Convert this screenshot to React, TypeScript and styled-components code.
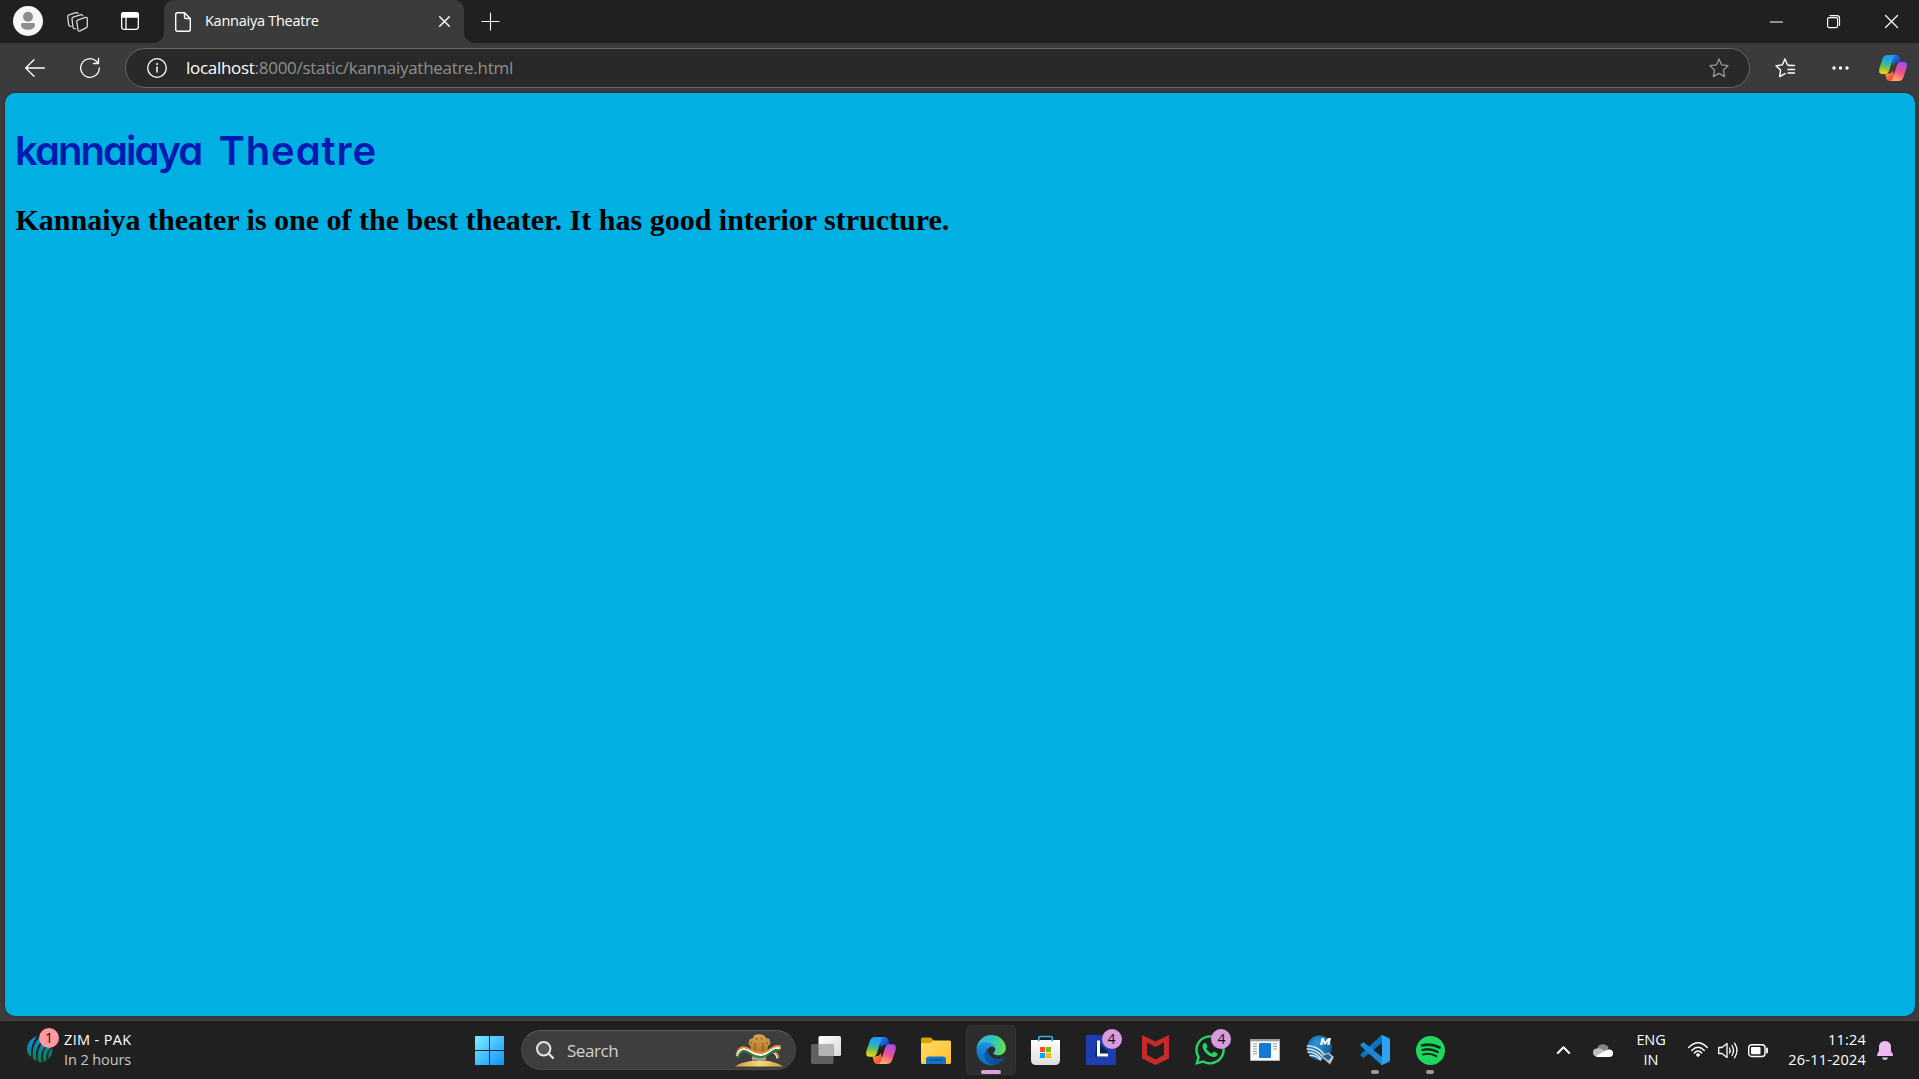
import React from "react";
import styled, { createGlobalStyle, css } from "styled-components";
import { FaWhatsapp } from "react-icons/fa";

const UI = `"Open Sans", "Noto Sans", sans-serif`;

const GlobalStyle = createGlobalStyle`
  * { box-sizing: border-box; }
  html, body { margin: 0; padding: 0; overflow: hidden; }
  svg { display: block; flex: none; overflow: visible; }
`;

const Desktop = styled.div`
  display: flex;
  flex-direction: column;
  width: 1919px;
  height: 1079px;
  background: #3b3b3b;
  font-family: ${UI};
  color: #fff;
`;

const TabStrip = styled.div`
  display: flex;
  height: 43px;
  background: #202020;
`;

const Slot = styled.div<{ $w: number; $dx?: number; $up?: number }>`
  display: flex;
  flex: none;
  align-items: center;
  justify-content: center;
  width: ${(p) => p.$w}px;
  padding-left: ${(p) => p.$dx ?? 0}px;
  padding-bottom: ${(p) => p.$up ?? 0}px;
`;

const Spacer = styled.div`
  flex: 1;
`;

const Tab = styled.div`
  position: relative;
  display: flex;
  align-items: center;
  width: 300px;
  margin-left: 2px;
  padding: 0 14px 0 11px;
  background: #3b3b3b;
  border-radius: 10px 10px 0 0;

  &::before,
  &::after {
    content: "";
    position: absolute;
    bottom: 0;
    width: 10px;
    height: 10px;
  }
  &::before {
    left: -10px;
    background: radial-gradient(circle at 0 0, transparent 9.5px, #3b3b3b 10px);
  }
  &::after {
    right: -10px;
    background: radial-gradient(circle at 100% 0, transparent 9.5px, #3b3b3b 10px);
  }
`;

const TabTitle = styled.span`
  flex: 1;
  margin-left: 14px;
  margin-top: -2px;
  font-size: 14.5px;
  letter-spacing: -0.26px;
  white-space: nowrap;
`;

const Toolbar = styled.div`
  display: flex;
  height: 50px;
  padding: 5px 0 5px 12px;
`;

const AddressBar = styled.div`
  display: flex;
  flex: none;
  align-items: center;
  width: 1625px;
  height: 40px;
  margin-left: 12px;
  border: 1px solid #666;
  border-radius: 20px;
  background: #292929;
  padding: 0 20px 0 21px;
`;

const Url = styled.span`
  flex: 1;
  margin-left: 19px;
  margin-top: -2px;
  font-size: 17px;
  letter-spacing: -0.29px;
  color: #8f8f8f;
  white-space: nowrap;
`;

const Host = styled.span`
  color: #fff;
`;

const Page = styled.main`
  flex: none;
  width: 1910px;
  height: 923px;
  margin: 0 0 0 5px;
  padding: 30px 10px;
  border-radius: 10px;
  background: #00b0e3;
  box-shadow: 0 0 2px rgba(0, 0, 0, 0.5);
`;

const Heading = styled.h1`
  display: flex;
  gap: 17px;
  margin: 0;
  font-family: "Comic Sans MS", Inter, sans-serif;
  font-feature-settings: "cv11";
  font-size: 40px;
  font-weight: 600;
  line-height: 56px;
  color: #001ab0;
`;

const Word = styled.span<{ $spacing: number }>`
  letter-spacing: ${(p) => p.$spacing}px;
`;

const Description = styled.h2`
  margin: 23px 0 0;
  padding-left: 0.5px;
  font-family: "Times New Roman", "Liberation Serif", serif;
  font-size: 30px;
  line-height: 36px;
  font-weight: 700;
  color: #000;
`;

const Taskbar = styled.footer`
  display: flex;
  align-items: stretch;
  height: 59px;
  margin-top: 4px;
  padding-top: 4px;
  border-top: 1px solid #424242;
  background: #202020;
`;

const Widget = styled.div`
  position: relative;
  width: 464px;
  padding-left: 27px;
  display: flex;
  align-items: flex-start;
`;

const WidgetText = styled.div`
  margin-left: 11px;
  font-size: 14.5px;
  line-height: 20px;
  padding-top: 5px;
  letter-spacing: 0.35px;
`;

const Muted = styled.div`
  color: #c8c8c8;
  letter-spacing: -0.1px;
`;

const BallIcon = styled.div`
  padding-top: 10px;
  width: 26px;
`;

const Badge = styled.span<{ $color: string; $left: number; $top: number }>`
  position: absolute;
  left: ${(p) => p.$left}px;
  top: ${(p) => p.$top}px;
  width: 20px;
  height: 20px;
  border-radius: 50%;
  background: ${(p) => p.$color};
  color: #111;
  font-size: 14px;
  line-height: 20px;
  text-align: center;
`;

const Apps = styled.div`
  display: flex;
  gap: 4.95px;
  height: 50px;
`;

const App_ = styled.div<{ $active?: boolean; $running?: boolean }>`
  position: relative;
  display: flex;
  align-items: center;
  justify-content: center;
  width: 50px;
  height: 50px;
  border-radius: 5px;
  ${(p) =>
    p.$active &&
    css`
      background: #2d2d2d;
      box-shadow: inset 0 0 0 1px #333;
    `}
  ${(p) =>
    (p.$active || p.$running) &&
    css`
      &::after {
        content: "";
        position: absolute;
        bottom: 1px;
        left: ${p.$active ? 15 : 21}px;
        width: ${p.$active ? 20 : 8}px;
        height: 4px;
        border-radius: 2px;
        background: ${p.$active ? "#dc9fe0" : "#9a9a9a"};
      }
    `}
`;

const SearchBox = styled.div`
  display: flex;
  align-items: center;
  width: 275px;
  height: 40px;
  margin-top: 5px;
  margin-left: 2px;
  padding: 0 12px 0 14px;
  border-radius: 20px;
  border: 1px solid #494949;
  border-top-color: #606060;
  background: #3e3e3e;
`;

const SearchLabel = styled.span`
  flex: 1;
  margin-left: 13px;
  font-size: 17px;
  letter-spacing: -0.4px;
  color: #d2d2d2;
`;

const Tray = styled.div`
  display: flex;
  height: 50px;
  margin-left: auto;
  padding-right: 16px;
`;

const TrayText = styled.div<{ $w: number; $align: string; $spacing: number }>`
  width: ${(p) => p.$w}px;
  padding-top: 5px;
  text-align: ${(p) => p.$align};
  font-size: 14.5px;
  line-height: 20px;
  letter-spacing: ${(p) => p.$spacing}px;
  white-space: nowrap;
`;

const line = { fill: "none", stroke: "#fff", strokeLinecap: "round" as const, strokeLinejoin: "round" as const };

const CopilotLogo = ({ id, w = 28, h = 26 }: { id: string; w?: number; h?: number }) => (
  <svg width={w} height={h} viewBox="0 0 28 26" preserveAspectRatio="none">
    <defs>
      <linearGradient id={id + "a"} x1=".5" y1="0" x2=".35" y2="1">
        <stop offset="0" stopColor="#1c9cf0" />
        <stop offset=".35" stopColor="#22aed0" />
        <stop offset=".65" stopColor="#6cc05a" />
        <stop offset="1" stopColor="#ffd200" />
      </linearGradient>
      <linearGradient id={id + "b"} x1=".7" y1="0" x2=".3" y2="1">
        <stop offset="0" stopColor="#a04df2" />
        <stop offset=".5" stopColor="#f0508c" />
        <stop offset="1" stopColor="#ffb464" />
      </linearGradient>
      <linearGradient id={id + "c"} x1="0" y1="0" x2="1" y2="1">
        <stop offset="0" stopColor="#2a7cf0" />
        <stop offset="1" stopColor="#0c38b8" />
      </linearGradient>
      <linearGradient id={id + "d"} x1="0" y1="0" x2="1" y2="1">
        <stop offset="0" stopColor="#ffa04a" />
        <stop offset="1" stopColor="#e83c32" />
      </linearGradient>
    </defs>
    <path d="M13 0H17.2C19.2 0 20.2 1 20.8 3L22 7.5H18.5C16 7.5 15 8.5 14.3 10.5L13 6Z" fill={`url(#${id}c)`} />
    <path d="M15 26H10.8C8.8 26 7.8 25 7.2 23L6 18.5H9.5C12 18.5 13 17.5 13.7 15.5L15 20Z" fill={`url(#${id}d)`} />
    <path d="M8.5 0H17.2C15.2 0 14.5 1.5 13.9 3.5L10.2 15.5C9.4 18 8.2 19 6 19H3C0 19-.3 16 .5 13L3.5 4C4.5 1 6 0 8.5 0Z" fill={`url(#${id}a)`} />
    <path d="M19.5 26H10.8C12.8 26 13.5 24.5 14.1 22.5L17.8 10.5C18.6 8 19.8 7 22 7H25C28 7 28.3 10 27.5 13L24.5 22C23.5 25 22 26 19.5 26Z" fill={`url(#${id}b)`} />
  </svg>
);

const EdgeLogo = () => (
  <svg width="30" height="30" viewBox="2 4 252 254">
    <defs>
      <linearGradient id="e1" x1="0" y1=".5" x2="1" y2=".5">
        <stop offset="0" stopColor="#0c59a4" />
        <stop offset="1" stopColor="#114a8b" />
      </linearGradient>
      <linearGradient id="e2" x1=".6" y1="0" x2=".2" y2="1">
        <stop offset="0" stopColor="#1b9de2" />
        <stop offset=".5" stopColor="#1680d0" />
        <stop offset="1" stopColor="#0669bc" />
      </linearGradient>
      <linearGradient id="e3" x1="0" y1=".4" x2="1" y2=".5">
        <stop offset="0" stopColor="#32b5e8" />
        <stop offset=".5" stopColor="#2fc2c0" />
        <stop offset="1" stopColor="#62e050" />
      </linearGradient>
    </defs>
    <path fill="url(#e1)" d="M235.68 195.46a93.73 93.73 0 0 1-10.54 4.71 101.87 101.87 0 0 1-35.9 6.46c-47.32 0-88.54-32.55-88.54-74.32A31.48 31.48 0 0 1 117.13 105c-42.8 1.8-53.8 46.4-53.8 72.53 0 73.88 68.09 81.37 82.76 81.37 7.91 0 19.84-2.3 27-4.56l1.31-.44a128.34 128.34 0 0 0 66.6-52.8 4 4 0 0 0-5.32-5.64Z" />
    <path fill="url(#e2)" d="M110.34 246.34A79.2 79.2 0 0 1 87.6 225a80.72 80.72 0 0 1 29.53-120c3.12-1.47 8.45-4.13 15.54-4a32.35 32.35 0 0 1 25.69 13 31.88 31.88 0 0 1 6.36 18.66c0-.21 24.46-79.6-80-79.6-43.9 0-80 41.66-80 78.21a130.15 130.15 0 0 0 12.11 56 128 128 0 0 0 156.38 67.11 75.55 75.55 0 0 1-62.78-8Z" />
    <path fill="url(#e3)" d="M149.94 153.78c-.81 1.05-3.3 2.5-3.3 5.66 0 2.61 1.7 5.12 4.72 7.23 14.38 10 41.49 8.68 41.56 8.68a59.56 59.56 0 0 0 30.27-8.35 61.38 61.38 0 0 0 30.43-52.88c.26-22.41-8-37.31-11.34-43.91C221.08 28.77 178.37 4.6 130.67 4.6a126 126 0 0 0-126 126.2C5.16 94.3 41.4 65.23 84.87 65.23c3.68 0 24.69.36 44.2 10.6 17.2 9 26.21 19.94 32.47 30.75 4 9 4.67 25.4 -3.33 39.05Z" />
  </svg>
);

const starPath = "M10 1 12.7 6.9 19 7.7 14.4 12.1 15.6 18.6 10 15.4 4.4 18.6 5.6 12.1 1 7.7 7.3 6.9Z";

const Emblem = () => (
  <svg width="48" height="33" viewBox="0 0 48 33">
    <defs>
      <linearGradient id="gold" x1="0" y1="0" x2="0" y2="1">
        <stop offset="0" stopColor="#d9a648" />
        <stop offset="1" stopColor="#a86f20" />
      </linearGradient>
      <linearGradient id="mound" x1="0" y1="0" x2="1" y2="0">
        <stop offset="0" stopColor="#c99b3c" />
        <stop offset=".5" stopColor="#f6d980" />
        <stop offset="1" stopColor="#d0a040" />
      </linearGradient>
    </defs>
    <path d="M0 32.500Q2 30.500 7 29Q24 23.500 41 29Q46 30.500 48 32.500Z" fill="url(#mound)" />
    <path d="M17 26.500V23H31V26.500Q24 25.500 17 26.500Z" fill="#9c9ca4" />
    <path d="M19 1.500Q24-1 29 1.500L31 4 34.500 5 35.500 10 33 12 31.500 23H17L15.500 12 13.500 10 14.500 5.500 18 4Z" fill="url(#gold)" />
    <path d="M21.500 3.500V6M26.500 3.500V6M20 9V20M28 9V20M17 8 15.500 10M31.500 8 33 10" stroke="#80561c" strokeWidth="1" fill="none" />
    <g fill="none">
      <path d="M1.500 20.500C4 12 9 11.500 15 15.500S27 21 34 16 42 11.800 46 12.300" stroke="#f08a35" strokeWidth="1.900" />
      <path d="M2 22.300C4.500 14 9 13.500 15 17.500S27 23 34 18 42 13.800 45.500 14.200" stroke="#fff" strokeWidth="1.900" />
      <path d="M2.500 24.300C5 16 9 15.500 15 19.500S27 25 34 20 41 15.800 45 16.200" stroke="#25853a" strokeWidth="1.900" />
      <path d="M40 18.500Q43.500 19.500 43.500 24" stroke="#f08a35" strokeWidth="1.500" />
      <path d="M38.500 19Q42 20.500 42 24.500" stroke="#fff" strokeWidth="1.300" />
    </g>
  </svg>
);

const App = () => (
  <>
    <GlobalStyle />
    <Desktop>
      <TabStrip>
        <Slot $w={56} $up={1}>
          <svg width="30" height="30" viewBox="0 0 30 30">
            <circle cx="15" cy="15" r="15" fill="#f7f7f7" />
            <circle cx="15" cy="10.700" r="5" fill="#8e8e8e" />
            <path d="M9.500 17H20.500Q22 17 22 18.500C22 22 19 23.800 15 23.800S8 22 8 18.500Q8 17 9.500 17Z" fill="#8e8e8e" />
          </svg>
        </Slot>
        <Slot $w={42}>
          <svg width="21" height="20" viewBox="0 0 21 20" {...line} stroke="#d8d8d8" strokeWidth="1.300">
            <path d="M9.700 9.700Q9.700 8.300 11 7.800L18.500 5.400Q20.300 5 20.300 6.700V14Q20.300 15.300 19 15.900L13 18.900Q11.300 19.600 11 18Z" />
            <path d="M8.500 16.600 7.500 16.700Q6.300 16.600 6 15.300L5 7Q4.900 5.700 6.200 5.100L14 2.700Q15.300 2.400 15.700 3.700" />
            <path d="M4.200 14.300 3 14.200Q1.900 14 1.700 12.800L.7 4.800Q.6 3.500 1.900 2.900L9 .6Q10.300.300 10.900 1.400" />
          </svg>
        </Slot>
        <Slot $w={64} $up={1}>
          <svg width="18" height="18" viewBox="0 0 18 18" {...line} strokeWidth="1.300">
            <rect x=".65" y=".65" width="16.700" height="16.700" rx="2.500" />
            <path d="M.6 5V3Q.6.6 3 .6H15Q17.400.6 17.400 3V5Z" fill="#fff" />
            <path d="M5 5V17.300" />
          </svg>
        </Slot>
        <Tab>
          <svg width="16" height="20" viewBox="0 0 16 20" {...line} strokeWidth="1.400">
            <path d="M2.500.7H9.500L15.300 6.500V17.500Q15.300 19.300 13.500 19.300H2.500Q.7 19.300.7 17.500V2.500Q.7.7 2.500.7ZM9.500 1V5Q9.500 6.500 11 6.500H15" />
          </svg>
          <TabTitle>Kannaiya Theatre</TabTitle>
          <svg width="11" height="11" viewBox="0 0 11 11" {...line} strokeWidth="1.400">
            <path d="M.7.7 10.300 10.300M10.300.7.7 10.300" />
          </svg>
        </Tab>
        <Slot $w={53} $up={1}>
          <svg width="17" height="17" viewBox="0 0 17 17" {...line} strokeWidth="1.100">
            <path d="M8.500 0V17M0 8.500H17" />
          </svg>
        </Slot>
        <Spacer />
        <Slot $w={54}>
          <svg width="13" height="2" viewBox="0 0 13 2"><path d="M0 .5H13V1.500H0Z" fill="#fff" /></svg>
        </Slot>
        <Slot $w={61}>
          <svg width="13" height="13" viewBox="0 0 13 13" {...line} strokeWidth="1.200">
            <rect x=".6" y="2.600" width="10" height="10" rx="1.500" />
            <path d="M3 .6H10Q12.500.6 12.500 3V10.300" />
          </svg>
        </Slot>
        <Slot $w={55}>
          <svg width="13" height="13" viewBox="0 0 13 13" {...line} strokeWidth="1.200">
            <path d="M.5.5 12.500 12.500M12.500.5.500 12.500" />
          </svg>
        </Slot>
      </TabStrip>

      <Toolbar>
        <Slot $w={46} $up={1}>
          <svg width="20" height="18" viewBox="0 0 20 18" {...line} strokeWidth="1.300">
            <path d="M19.300 9H1M9 .7.700 9 9 17.300" />
          </svg>
        </Slot>
        <Slot $w={55} $dx={9} $up={1}>
          <svg width="20" height="20" viewBox="0 0 20 20" {...line} strokeWidth="1.300">
            <path d="M19.300 10A9.300 9.300 0 1 1 16.200 3.100L18.500 5.300M18.500.5V5.500H13.500" />
          </svg>
        </Slot>
        <AddressBar>
          <svg width="20" height="20" viewBox="0 0 20 20" {...line} strokeWidth="1.300">
            <circle cx="10" cy="10" r="9.300" />
            <path d="M10 9V14" strokeWidth="1.500" />
            <circle cx="10" cy="6" r=".5" fill="#fff" strokeWidth="1" />
          </svg>
          <Url><Host>localhost</Host>:8000/static/kannaiyatheatre.html</Url>
          <svg width="20" height="20" viewBox="0 0 20 20" {...line} stroke="#989898" strokeWidth="1.300">
            <path d={starPath} />
          </svg>
        </AddressBar>
        <Slot $w={70}>
          <svg width="20" height="20" viewBox="0 0 20 20" {...line} strokeWidth="1.400">
            <path d="M17 7.400 12.500 6.900 10 1 7.300 6.900 1 7.700 5.600 12.100 4.700 18.600 10 15.600M13.500 7.500H19.500M13 11.500H19.500M13 15H19.500" />
          </svg>
        </Slot>
        <Slot $w={40}>
          <svg width="17" height="4" viewBox="0 0 17 4" fill="#fff">
            <circle cx="2" cy="2" r="1.700" /><circle cx="8.500" cy="2" r="1.700" /><circle cx="15" cy="2" r="1.700" />
          </svg>
        </Slot>
        <Slot $w={59} $dx={7}><CopilotLogo id="t" /></Slot>
      </Toolbar>

      <Page>
        <Heading><Word $spacing={-1.95}>kannaiaya</Word><Word $spacing={0.9}>Theatre</Word></Heading>
        <Description>Kannaiya theater is one of the best theater. It has good interior structure.</Description>
      </Page>

      <Taskbar>
        <Widget>
          <BallIcon>
            <svg width="26" height="28" viewBox="0 0 26 28">
              <defs>
                <linearGradient id="icc" x1="0" y1="2" x2="4" y2="27" gradientUnits="userSpaceOnUse">
                  <stop offset="0" stopColor="#168bd8" />
                  <stop offset=".5" stopColor="#0c87a0" />
                  <stop offset="1" stopColor="#0b7a4c" />
                </linearGradient>
              </defs>
              <g fill="url(#icc)">
                <path d="M10 1Q0 5 0 14 0 19 4 22 3 10 10 1Z" />
                <path d="M12 3Q4 11 6 24L9.500 26Q7 14 15 5Z" />
                <path d="M17 6Q9 14 11 27L15 27.500Q12 17 20 9Z" />
                <path d="M21 10Q14 17 16.500 27L20 25Q18 18 24 13Z" />
                <path d="M25.500 13Q20 18 21.500 24 25 21 25.500 13Z" />
              </g>
            </svg>
          </BallIcon>
          <Badge $color="#ff98a2" $left={39} $top={3}>1</Badge>
          <WidgetText>ZIM - PAK<Muted>In 2 hours</Muted></WidgetText>
        </Widget>
        <Apps>
          <App_>
            <svg width="29" height="29" viewBox="0 0 29 29">
              <defs>
                <linearGradient id="win" x1="0" y1="0" x2="29" y2="29" gradientUnits="userSpaceOnUse">
                  <stop offset="0" stopColor="#7df0ff" />
                  <stop offset=".5" stopColor="#45bfff" />
                  <stop offset="1" stopColor="#0a94f8" />
                </linearGradient>
              </defs>
              <path fill="url(#win)" d="M0 0H14V14H0ZM15 0H29V14H15ZM0 15H14V29H0ZM15 15H29V29H15Z" />
            </svg>
          </App_>
          <SearchBox>
            <svg width="18" height="18" viewBox="0 0 18 18" {...line} stroke="#e4e4e4" strokeWidth="2">
              <circle cx="7.700" cy="7.700" r="6.700" fill="#555" />
              <path d="M12.800 12.800 17 17" strokeWidth="2.300" />
            </svg>
            <SearchLabel>Search</SearchLabel>
            <Emblem />
          </SearchBox>
          <App_>
            <svg width="30" height="28" viewBox="0 0 30 28">
              <defs>
                <linearGradient id="tv" x1="0" y1="0" x2="1" y2="1">
                  <stop offset="0" stopColor="#fff" /><stop offset="1" stopColor="#dadada" />
                </linearGradient>
              </defs>
              <rect x="7.500" width="22.500" height="20" rx="1.500" fill="url(#tv)" />
              <rect y="8" width="22.500" height="20" rx="1.500" fill="#606060" />
              <path d="M7.500 8H22.500V20H9Q7.500 20 7.500 18.500Z" fill="#b4b4b4" />
            </svg>
          </App_>
          <App_><CopilotLogo id="k" w={30} h={27} /></App_>
          <App_>
            <svg width="30" height="27" viewBox="0 0 30 27">
              <defs>
                <linearGradient id="fo" x1="0" y1="0" x2="1" y2="1">
                  <stop offset="0" stopColor="#ffdc62" /><stop offset="1" stopColor="#ffc02c" />
                </linearGradient>
              </defs>
              <path d="M0 2Q0 .5 1.500.5H9Q10 .5 11 1.500L13 4H20V12H0Z" fill="#dea000" />
              <path d="M0 7.500Q0 6 1.500 6H9Q10 6 11 5L12 3.500H28.500Q30 3.500 30 5V25.500Q30 27 28.500 27H1.500Q0 27 0 25.500Z" fill="url(#fo)" />
              <path d="M5 27V22.500Q5 19.500 8 19.500H22Q25 19.500 25 22.500V27Z" fill="#1274c8" />
              <path d="M8.500 23H21.500" stroke="#084a8c" strokeWidth="1.200" />
            </svg>
          </App_>
          <App_ $active><EdgeLogo /></App_>
          <App_>
            <svg width="29" height="30" viewBox="0 0 29 30">
              <defs>
                <linearGradient id="st" x1="0" y1="0" x2="0" y2="1">
                  <stop offset="0" stopColor="#fff" /><stop offset="1" stopColor="#dedede" />
                </linearGradient>
              </defs>
              <path d="M0 5H29V25Q29 30 24 30H5Q0 30 0 25Z" fill="url(#st)" />
              <path d="M7.800 6.500V3Q7.800 1.500 9.300 1.500H19.700Q21.200 1.500 21.200 3V6.500" fill="none" stroke="#2fb4ea" strokeWidth="1.600" />
              <path d="M9 12H14V17H9Z" fill="#f25022" /><path d="M15 12H20V17H15Z" fill="#7fba00" />
              <path d="M9 18H14V23H9Z" fill="#00a4ef" /><path d="M15 18H20V23H15Z" fill="#ffb900" />
            </svg>
          </App_>
          <App_>
            <svg width="30" height="30" viewBox="0 0 30 30">
              <path d="M0 0H30V30H0Z" fill="#1d3db0" />
              <path d="M11 5.500 9 22 20 22 22 20V17Z" fill="#0a2450" />
              <path d="M11 5.500H14V18.500H22V21.500H11Z" fill="#fff" />
            </svg>
            <Badge $color="#d79ce0" $left={26} $top={4}>4</Badge>
          </App_>
          <App_>
            <svg width="27" height="30" viewBox="0 0 27 30">
              <path d="M0 0 13.500 6.500 27 0V23.500L13.500 30 0 23.500ZM5 7.500V20L13.500 24.500 22 20V7.500L13.500 12Z" fill="#c42b2b" fillRule="evenodd" />
            </svg>
          </App_>
          <App_>
            <FaWhatsapp size={34} color="#27d366" />
            <Badge $color="#d79ce0" $left={26} $top={4}>4</Badge>
          </App_>
          <App_>
            <svg width="30" height="22" viewBox="0 0 30 22">
              <path d="M0 0H30V22H0Z" fill="#9b9b9b" />
              <path d="M.7 2.300H29.300V21.300H.7Z" fill="#fafafa" />
              <rect x="9" y="4" width="12" height="15" rx="1" fill="#1479d4" />
              <path d="M3 5H7M3 7.500H7M3 10H7M3 12.500H7M3 15H7M23 5H27M23 7.500H27M23 10H27" stroke="#9a9a9a" strokeWidth="1" />
            </svg>
          </App_>
          <App_>
            <svg width="28" height="30" viewBox="0 0 28 30">
              <defs>
                <radialGradient id="cb" cx=".4" cy=".3" r=".7">
                  <stop offset="0" stopColor="#3296d8" /><stop offset="1" stopColor="#0c5490" />
                </radialGradient>
              </defs>
              <circle cx="13.500" cy="13" r="12.500" fill="url(#cb)" />
              <path d="M15.500 3H18L19 7 22 3H25L23.500 10H21L22 6.500 19.500 9.500H18L17 6.500 16.500 10H14Z" fill="#f3f7fa" />
              <g fill="none" stroke="#dde8f0" strokeWidth="1.500" strokeLinecap="round">
                <path d="M1.500 11Q11 10.500 18 19" /><path d="M1.200 14Q9 13.500 16.500 21.500" /><path d="M2 17Q8.500 16.500 15 23.500" /><path d="M4 20.500Q9.500 20 14.500 25" />
              </g>
              <path d="M14 20.500 22.500 17.500 28 22 24 29.500Z" fill="#b9c3ca" />
              <path d="M16.500 21 22 19 25.500 22 22.500 25.500Z" fill="#1c5f94" />
            </svg>
          </App_>
          <App_ $running>
            <svg width="30" height="30" viewBox="0 0 30 30">
              <path d="M22 0V8L3.500 23 .7 20.800Q-.2 20 .7 19L20.500 1Q21.200.3 22 0Z" fill="#0c71bc" />
              <path d="M22 30V22L3.500 7 .7 9.200Q-.2 10 .7 11L20.500 29Q21.200 29.700 22 30Z" fill="#1a88d6" />
              <path d="M22 0 28.700 3Q30 3.700 30 5V25Q30 26.300 28.700 27L22 30Q21 30 20.500 29.200 22 29.500 22 28V2Q22 .5 20.500.8 21 0 22 0Z" fill="#2ea3f2" />
            </svg>
          </App_>
          <App_ $running>
            <svg width="29" height="29" viewBox="0 0 29 29">
              <circle cx="14.500" cy="14.500" r="14.500" fill="#1ed760" />
              <g fill="none" stroke="#10301a" strokeLinecap="round">
                <path d="M6 9.500Q15 7 23.500 11.500" strokeWidth="2.700" />
                <path d="M6.500 14Q14.500 11.800 21.800 16" strokeWidth="2.300" />
                <path d="M7 18.500Q14 16.500 20.300 20.200" strokeWidth="2" />
              </g>
            </svg>
          </App_>
        </Apps>
        <Tray>
          <Slot $w={40}>
            <svg width="13" height="8" viewBox="0 0 13 8" {...line} strokeWidth="2"><path d="M.8 7 6.500 1.200 12.200 7" /></svg>
          </Slot>
          <Slot $w={40}>
            <svg width="20" height="13" viewBox="0 0 20 13">
              <path d="M4 5.500A6 6 0 0 1 15.500 4L12 9H4Z" fill="#858585" />
              <path d="M4 4.500Q6.500 3.500 9 5.300L15 9 8 12.500H4A4 4 0 0 1 4 4.500Z" fill="#bdbdbd" />
              <path d="M3 12 12 7Q13.500 5 16 5.500A3.700 3.700 0 0 1 16.500 13H4Q3 12.500 3 12Z" fill="#fff" />
            </svg>
          </Slot>
          <TrayText $w={56} $align="center" $spacing={-0.1}>ENG<br />IN</TrayText>
          <Slot $w={38} $up={1}>
            <svg width="20" height="15" viewBox="0 0 20 15" {...line} strokeWidth="1.400">
              <path d="M.7 5.500Q10-4 19.300 5.500M3.700 8.500Q10 2 16.300 8.500M6.300 11Q10 7 13.700 11" />
              <circle cx="10" cy="13" r="1.400" fill="#fff" strokeWidth=".8" />
            </svg>
          </Slot>
          <Slot $w={22}>
            <svg width="20" height="17" viewBox="0 0 20 17" {...line} strokeWidth="1.300">
              <path d="M.7 5.500H4L9 1.500V15.500L4 11.500H.7Z" />
              <path d="M11.500 6Q13 8.500 11.500 11M14 3.500Q17 8.500 14 13.500M16.500 1.200Q21.500 8.500 16.500 15.800" />
            </svg>
          </Slot>
          <Slot $w={38}>
            <svg width="20" height="13" viewBox="0 0 20 13" {...line} strokeWidth="1.400">
              <rect x=".7" y=".7" width="16.300" height="11.800" rx="3" />
              <rect x="3" y="3" width="9.500" height="7.200" rx="1" fill="#fff" stroke="none" />
              <path d="M19 4.500V8.500" strokeWidth="1.800" />
            </svg>
          </Slot>
          <TrayText $w={89} $align="right" $spacing={0.2}>11:24<br />26-11-2024</TrayText>
          <Slot $w={37}>
            <svg width="16" height="19" viewBox="0 0 16 19" fill="#efb9f2">
              <path d="M8 0Q14 0 14 6.500V10L16 13.500Q16.300 15 15 15H1Q-.3 15 0 13.500L2 10V6.500Q2 0 8 0Z" />
              <path d="M5 16.500H11Q10.500 19 8 19T5 16.500Z" />
            </svg>
          </Slot>
        </Tray>
      </Taskbar>
    </Desktop>
  </>
);

export default App;
